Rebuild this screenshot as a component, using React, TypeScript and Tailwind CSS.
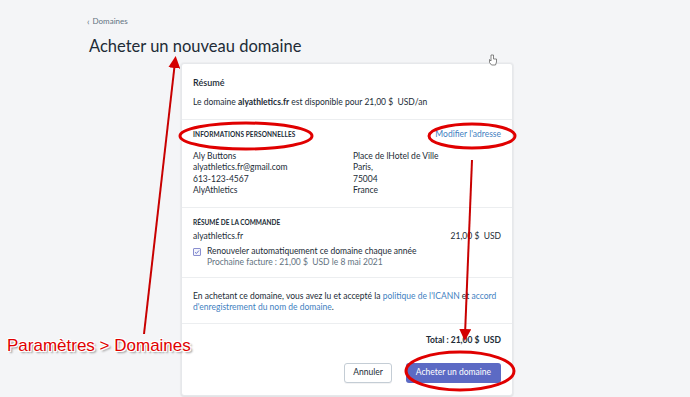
import React from "react";

const font = { fontFamily: 'Lato, "Open Sans", sans-serif' };

function Annotations() {
  return (
    <svg className="pointer-events-none absolute inset-0" width={690} height={397} viewBox="0 0 690 397">
      <defs>
        <marker id="ah" markerWidth="6" markerHeight="6" refX="3" refY="3" orient="auto">
          <path d="M0,0 L6,3 L0,6 Z" fill="#d40000" />
        </marker>
      </defs>
      <line x1={144} y1={334} x2={175} y2={62} stroke="#c80000" strokeWidth={2} markerEnd="url(#ah)" />
      <line x1={472} y1={160} x2={465} y2={335} stroke="#c80000" strokeWidth={2} markerEnd="url(#ah)" />
      <ellipse cx={246} cy={136} rx={66} ry={13} fill="none" stroke="#e00000" strokeWidth={3} />
      <ellipse cx={472} cy={136} rx={43} ry={12} fill="none" stroke="#e00000" strokeWidth={3} />
      <ellipse cx={460} cy={371} rx={54} ry={19} fill="none" stroke="#e00000" strokeWidth={3} />
      <path d="M491 55 l0 6 l-1.5 -1.5 l0 3 l2 2.5 l4 0 l1 -3 l0 -3 l-3 0 l0 -4 z" fill="#fff" stroke="#666" strokeWidth={0.8} />
    </svg>
  );
}

export default function App() {
  return (
    <div className="relative h-[397px] w-[690px] overflow-hidden bg-[#f4f5f7] text-[#212b36]" style={font}>
      <div className="pl-[87px] pt-[15px]">
        <div className="flex items-center gap-[3px] text-[8px] text-[#637381]">
          <span className="text-[9px] leading-none">‹</span>
          <span>Domaines</span>
        </div>
        <h1 className="mt-[8px] pl-[2px] text-[16.5px] leading-[22px] text-[#212b36]">Acheter un nouveau domaine</h1>
      </div>

      <div className="ml-[181px] mt-[6px] w-[332px] rounded-[3px] border border-[#e6e8eb] bg-white text-[8.5px] leading-[11.5px] shadow-[0_0_0_1px_rgba(63,63,68,0.03),0_1px_2px_rgba(63,63,68,0.08)]">
        <div className="px-[11px] pb-[11px] pt-[13px]">
          <div className="text-[9px] font-semibold">Résumé</div>
          <div className="mt-[8px]">
            Le domaine <b>alyathletics.fr</b> est disponible pour 21,00 $&nbsp; USD/an
          </div>
        </div>

        <div className="border-t border-[#eceef0] px-[11px] pb-[10px] pt-[9px]">
          <div className="flex items-center justify-between">
            <div className="text-[6.5px] font-bold tracking-[0.1px]">INFORMATIONS PERSONNELLES</div>
            <div className="text-[#3f7fbf]">Modifier l'adresse</div>
          </div>
          <div className="mt-[10px] grid grid-cols-2">
            <div>
              <div>Aly Buttons</div>
              <div>alyathletics.fr@gmail.com</div>
              <div>613-123-4567</div>
              <div>AlyAthletics</div>
            </div>
            <div className="pl-[6px]">
              <div>Place de lHotel de Ville</div>
              <div>Paris,</div>
              <div>75004</div>
              <div>France</div>
            </div>
          </div>
        </div>

        <div className="border-t border-[#eceef0] px-[11px] pb-[8px] pt-[9px]">
          <div className="text-[6.5px] font-bold">RÉSUMÉ DE LA COMMANDE</div>
          <div className="mt-[3px] flex justify-between">
            <span>alyathletics.fr</span>
            <span>21,00 $&nbsp; USD</span>
          </div>
          <div className="mt-[3px] flex gap-[6px]">
            <div className="mt-[2px] flex h-[8px] w-[8px] items-center justify-center rounded-[1px] border border-[#8a8fd0] bg-[#f3f4fb]">
              <svg width="6" height="6" viewBox="0 0 6 6">
                <path d="M1 3.2 L2.4 4.5 L5 1.5" fill="none" stroke="#5c6ac4" strokeWidth="0.9" />
              </svg>
            </div>
            <div>
              <div>Renouveler automatiquement ce domaine chaque année</div>
              <div className="text-[#637381]">Prochaine facture : 21,00 $&nbsp; USD le 8 mai 2021</div>
            </div>
          </div>
        </div>

        <div className="border-t border-[#eceef0] px-[11px] pb-[9px] pt-[13px]">
          <div>
            En achetant ce domaine, vous avez lu et accepté la <span className="text-[#3f7fbf]">politique de l'ICANN</span> et{" "}
            <span className="text-[#3f7fbf]">accord</span>
          </div>
          <div>
            <span className="text-[#3f7fbf]">d'enregistrement du nom de domaine</span>.
          </div>
        </div>

        <div className="border-t border-[#eceef0] px-[11px] pb-[12px] pt-[11px]">
          <div className="text-right font-bold">Total : 21,00 $&nbsp; USD</div>
          <div className="mt-[17px] flex justify-end gap-[14px]">
            <button className="h-[20px] rounded-[3px] border border-[#c4cdd5] bg-white px-[8px] text-[8.5px] text-[#212b36] shadow-[0_1px_0_rgba(22,29,37,0.05)]">
              Annuler
            </button>
            <button className="h-[20px] rounded-[3px] bg-[#5c6ac4] px-[10px] text-[8.5px] text-white">Acheter un domaine</button>
          </div>
        </div>
      </div>

      <div
        className="absolute left-[7px] top-[334px] text-[17px] leading-[24px] text-[#e00000]"
        style={{ fontFamily: '"Liberation Sans", Arial, sans-serif', textShadow: "1px 1px 0 #fff, -1px -1px 0 #fff, 1px -1px 0 #fff, -1px 1px 0 #fff, 2px 2px 2px #888" }}
      >
        Paramètres &gt; Domaines
      </div>

      <Annotations />
    </div>
  );
}
